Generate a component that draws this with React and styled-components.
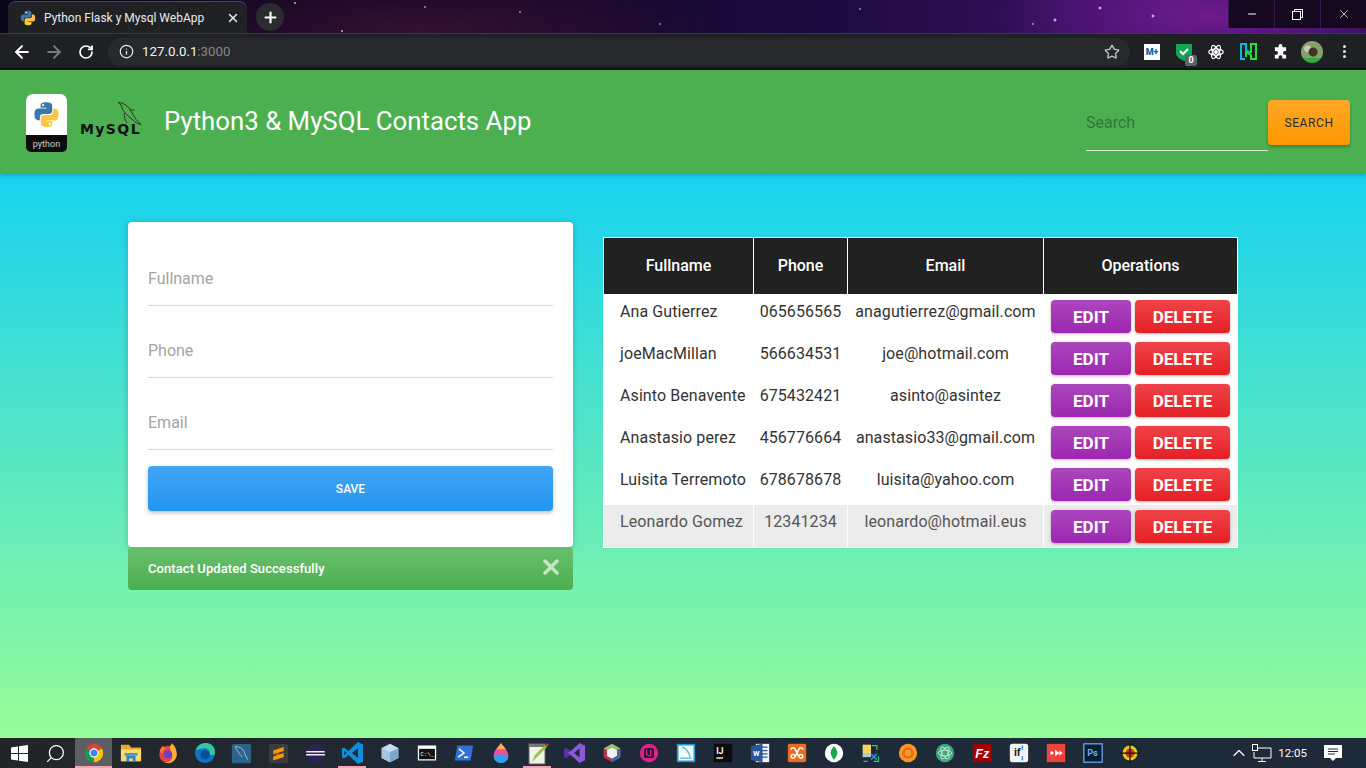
import React from "react";
import styled, { createGlobalStyle } from "styled-components";
import {
  ArrowLeft,
  ArrowRight,
  RotateCw,
  Info,
  Star,
  Plus,
  X,
  Minus,
  ChevronUp,
  Search as SearchIcon,
} from "lucide-react";

const contacts = [
  { name: "Ana Gutierrez", phone: "065656565", email: "anagutierrez@gmail.com" },
  { name: "joeMacMillan", phone: "566634531", email: "joe@hotmail.com" },
  { name: "Asinto Benavente", phone: "675432421", email: "asinto@asintez" },
  { name: "Anastasio perez", phone: "456776664", email: "anastasio33@gmail.com" },
  { name: "Luisita Terremoto", phone: "678678678", email: "luisita@yahoo.com" },
  { name: "Leonardo Gomez", phone: "12341234", email: "leonardo@hotmail.eus" },
];

const PythonMark = ({ size = 16 }) => (
  <svg width={size} height={size} viewBox="0 0 24 24">
    <path
      fill="#3b77a8"
      d="M11.9 1C6.5 1 6.8 3.4 6.8 3.4v2.5h5.2v.7H4.8S1.3 6.2 1.3 11.8s3 5.3 3 5.3h1.8v-2.6s-.1-3 3-3h5.1s2.9 0 2.9-2.8V4s.4-3-5.2-3z"
    />
    <path
      fill="#fdc63f"
      transform="rotate(180 12 12)"
      d="M11.9 1C6.5 1 6.8 3.4 6.8 3.4v2.5h5.2v.7H4.8S1.3 6.2 1.3 11.8s3 5.3 3 5.3h1.8v-2.6s-.1-3 3-3h5.1s2.9 0 2.9-2.8V4s.4-3-5.2-3z"
    />
    <circle cx="9" cy="3.6" r="1" fill="#fff" />
    <circle cx="15" cy="20.4" r="1" fill="#fff" />
  </svg>
);

const Svg = ({ children, size = 20 }) => (
  <svg width={size} height={size} viewBox="0 0 24 24">
    {children}
  </svg>
);

const taskIcons = [
  { id: "chrome", active: true, open: true, svg: (
    <Svg>
      <circle cx="12" cy="12" r="11" fill="#db4437" />
      <path d="M12 12 2.5 6.5A11 11 0 0 0 12 23z" fill="#0f9d58" />
      <path d="M12 12V23A11 11 0 0 0 21.5 6.500z" fill="#f4c20d" />
      <circle cx="12" cy="12" r="5.600" fill="#fff" />
      <circle cx="12" cy="12" r="4.200" fill="#4285f4" />
    </Svg>
  ) },
  { id: "folder", svg: (
    <Svg size={22}>
      <path d="M1 3h9l2 3h11v15H1z" fill="#e9a92f" />
      <path d="M1 8h22v13H1z" fill="#fbd96b" />
      <path d="M7 15h10v6h-3v-3h-4v3H7z" fill="#2f86c9" />
      <path d="M5 12h14v3H5z" fill="#3a9bdc" />
    </Svg>
  ) },
  { id: "firefox", svg: (
    <Svg size={22}>
      <circle cx="12" cy="13.500" r="9.500" fill="#e8414c" />
      <path d="M21.500 13.500A9.500 9.500 0 0 1 8 22c6 1 9.500-3 8.500-8-.6-3-2.500-5-2.500-8.500C15.500 2.500 16 2 16 1c3.500 3 5.500 7 5.500 12.500z" fill="#ffb02c" />
      <path d="M3 11c0-3 2-6 4-7 0 2 2 3 3 3-2 1-4 2-4 5-1 0-2-.5-3-1z" fill="#ff7a2c" />
      <circle cx="12" cy="13.500" r="4.500" fill="#6c3fc4" />
    </Svg>
  ) },
  { id: "edge", svg: (
    <Svg size={22}>
      <circle cx="12" cy="12" r="11" fill="#0f72c4" />
      <path d="M2 9C4 2 13-1 19 3c3 2 4 5 4 9 0 3-5 3-6 1 1-4-3-7-7-6-3 .5-6 1-8 2z" fill="#35c6a0" />
      <circle cx="12" cy="14" r="5" fill="#0a4f96" />
    </Svg>
  ) },
  { id: "workbench", svg: (
    <Svg size={21}>
      <rect x="1" y="1" width="22" height="22" rx="2" fill="#2b6488" />
      <path d="M5 4c6 0 10 4 11 9l3 6M5 4c2 5 4 8 8 12" stroke="#a9c9dc" strokeWidth="1" fill="none" />
    </Svg>
  ) },
  { id: "sublime", svg: (
    <Svg size={21}>
      <rect x="1" y="1" width="22" height="22" rx="2" fill="#3c3c3c" />
      <path d="M6 8.500l12-4v4.500L6 13z" fill="#ff9800" />
      <path d="M6 10.500l12 4V16L6 12z" fill="#c27406" />
      <path d="M6 15.500l12-4V16L6 20z" fill="#ff9800" />
    </Svg>
  ) },
  { id: "eclipse", svg: (
    <Svg size={21}>
      <circle cx="12" cy="12" r="11" fill="#2c2255" />
      <path d="M1.500 9h21v1.800h-21zM1.200 12.500h21.600v1.800H1.200z" fill="#f1eef8" />
    </Svg>
  ) },
  { id: "vscode", open: true, svg: (
    <Svg size={24}>
      <path d="M17 1l5 2.400v17.200L17 23 7.500 14 3 17.500 1 16.400V7.600L3 6.500 7.500 10z" fill="#0d8fdc" />
      <path d="M17 7l-6 5 6 5z" fill="#1e2a38" />
      <path d="M3.200 9.500v5L5.500 12z" fill="#1e2a38" />
    </Svg>
  ) },
  { id: "box", svg: (
    <Svg>
      <path d="M12 1l10 5v12l-10 5-10-5V6z" fill="#c8dcef" />
      <path d="M12 11l10-5v12l-10 5z" fill="#7ea7cf" />
      <path d="M12 11v12L2 18V6z" fill="#a5c4e2" />
    </Svg>
  ) },
  { id: "cmd", svg: (
    <Svg>
      <rect x="1" y="3" width="22" height="18" fill="#fff" />
      <rect x="2.500" y="7" width="19" height="12.500" fill="#111" />
      <text x="4" y="16" fontSize="7" fontFamily="Liberation Mono, monospace" fill="#fff">C:\_</text>
    </Svg>
  ) },
  { id: "powershell", svg: (
    <Svg>
      <path d="M4 3h19l-3 18H1z" fill="#2f6fd6" />
      <path d="M6 7l6 5-7 5M12 17h5" stroke="#fff" strokeWidth="1.800" fill="none" />
    </Svg>
  ) },
  { id: "drop", svg: (
    <Svg size={22}>
      <path d="M12 1c4 5 8 9 8 14a8 8 0 0 1-16 0c0-5 4-9 8-14z" fill="#e94fa0" />
      <path d="M12 1c2 3 4 5 5.500 7H7c1.500-2 3-4 5-7z" fill="#ffb13b" />
      <path d="M4 15a8 8 0 0 0 8 8c4 0 8-3 8-8-5-2-11-2-16 0z" fill="#2f9fe8" />
    </Svg>
  ) },
  { id: "notepad", open: true, svg: (
    <Svg size={24}>
      <rect x="3" y="3" width="16" height="20" fill="#f2f2ea" stroke="#666" />
      <path d="M3 3h16v3H3z" fill="#777" />
      <path d="M6 21l3-7 10-10 2 2-10 10z" fill="#8dc63f" />
      <path d="M19 4l2-2 2 2-2 2z" fill="#c0392b" />
    </Svg>
  ) },
  { id: "vstudio", svg: (
    <Svg size={22}>
      <path d="M17 1l6 3v16l-6 3-10-9-5 3.500L0 16V8l2-1.500L7 10z" fill="#8a5ad6" />
      <path d="M17 7l-6 5 6 5z" fill="#1e2a38" />
      <path d="M0 8l2-1.500L7 10l-3 2 3 2-5 3.500L0 16z" fill="#5b2fa8" />
    </Svg>
  ) },
  { id: "cube", svg: (
    <Svg>
      <path d="M12 1l10 5.500v11L12 23 2 17.500v-11z" fill="#c0314b" />
      <path d="M12 5l6 3.500v7L12 19l-6-3.500v-7z" fill="#f0f0f0" />
      <path d="M12 1l10 5.500-4 2L12 5 6 8.500l-4-2z" fill="#8fc66b" />
      <path d="M22 6.500v11L12 23v-4l6-3.500v-7z" fill="#3b6d9e" />
    </Svg>
  ) },
  { id: "pink", svg: (
    <Svg>
      <circle cx="12" cy="12" r="11" fill="#e01e8c" />
      <rect x="6" y="6" width="12" height="12" rx="2" fill="#2b1a2a" />
      <path d="M9 8v6h2M14 8v7h-3" stroke="#e01e8c" strokeWidth="1.500" fill="none" />
    </Svg>
  ) },
  { id: "dbforge", svg: (
    <Svg>
      <rect x="1" y="1" width="22" height="22" fill="#1e9bd1" />
      <rect x="3" y="3" width="18" height="18" fill="#f3f8fb" />
      <path d="M7 5c5 1 8 5 10 12M5 18h14" stroke="#5cb0d8" strokeWidth="1.500" fill="none" />
    </Svg>
  ) },
  { id: "idea", svg: (
    <Svg>
      <rect x="1" y="1" width="22" height="22" fill="#0c0c0c" />
      <text x="4" y="13" fontSize="10" fontWeight="700" fontFamily="Roboto, sans-serif" fill="#fff">IJ</text>
      <path d="M4 18h8" stroke="#fff" strokeWidth="1.600" />
    </Svg>
  ) },
  { id: "word", svg: (
    <Svg>
      <rect x="7" y="1" width="16" height="22" fill="#f2f4f8" />
      <path d="M13 5h8M13 9h8M13 13h8M13 17h8" stroke="#2b579a" strokeWidth="1.500" />
      <path d="M1 3.500 15 1v22L1 20.500z" fill="#2b579a" />
      <text x="3.500" y="15.500" fontSize="9" fontWeight="700" fontFamily="Roboto, sans-serif" fill="#fff">W</text>
    </Svg>
  ) },
  { id: "xampp", svg: (
    <Svg>
      <rect x="1" y="1" width="22" height="22" rx="2" fill="#ee6a1f" />
      <path d="M5 8c0-3 4-3 5 0l4 8c1 3 5 3 5 0s-4-3-5 0M19 8c0-3-4-3-5 0l-4 8c-1 3-5 3-5 0s4-3 5 0" stroke="#fff" strokeWidth="1.800" fill="none" />
    </Svg>
  ) },
  { id: "mongo", svg: (
    <Svg>
      <circle cx="12" cy="12" r="11" fill="#fff" />
      <path d="M12 4c3 3 4 6 4 8s-2 6-4 8c-2-2-4-6-4-8s1-5 4-8z" fill="#18a44c" />
    </Svg>
  ) },
  { id: "sourcetree", svg: (
    <Svg>
      <path d="M2 2h10v10H2z" fill="#f6d55c" />
      <path d="M2 12h10v5H2z" fill="#b9c7d4" />
      <path d="M13 3h6v5M3 22h5M21 16v6h-6" stroke="#2ecc71" strokeWidth="1.500" fill="none" />
      <path d="M12 13l7 7M19 13l-7 7" stroke="#2f86c9" strokeWidth="2" />
    </Svg>
  ) },
  { id: "ubuntu", svg: (
    <Svg>
      <circle cx="12" cy="12" r="11" fill="#f39a1f" />
      <circle cx="12" cy="12" r="5.500" fill="none" stroke="#f2622e" strokeWidth="3" />
    </Svg>
  ) },
  { id: "atom", svg: (
    <Svg>
      <circle cx="12" cy="12" r="11" fill="#3ca77c" />
      <g fill="none" stroke="#cfeee0" strokeWidth="1">
        <ellipse cx="12" cy="12" rx="8" ry="3.500" />
        <ellipse cx="12" cy="12" rx="8" ry="3.500" transform="rotate(60 12 12)" />
        <ellipse cx="12" cy="12" rx="8" ry="3.500" transform="rotate(120 12 12)" />
      </g>
    </Svg>
  ) },
  { id: "filezilla", svg: (
    <Svg>
      <rect x="1" y="1" width="22" height="22" fill="#a40000" />
      <text x="4" y="18" fontSize="15" fontWeight="700" fontStyle="italic" fontFamily="Liberation Sans, sans-serif" fill="#fff">Fz</text>
    </Svg>
  ) },
  { id: "if", svg: (
    <Svg>
      <rect x="1" y="1" width="22" height="22" rx="3" fill="#f4f4f4" />
      <text x="6" y="16" fontSize="13" fontWeight="700" fontFamily="Roboto, sans-serif" fill="#222">if</text>
      <path d="M16 3v5M16 16v5" stroke="#2f9fe8" strokeWidth="2" />
    </Svg>
  ) },
  { id: "anydo", svg: (
    <Svg>
      <rect x="1" y="1" width="22" height="22" fill="#f0433a" />
      <circle cx="7" cy="12" r="2" fill="#fff" />
      <path d="M11 8l5 4-5 4zM16 9l4 3-4 3z" fill="#fff" />
    </Svg>
  ) },
  { id: "ps", svg: (
    <Svg>
      <rect x="1" y="1" width="22" height="22" fill="#001e36" stroke="#7aa7f0" strokeWidth="1.500" />
      <text x="5" y="16" fontSize="11" fontWeight="700" fontFamily="Roboto, sans-serif" fill="#7aa7f0">Ps</text>
    </Svg>
  ) },
  { id: "cross", svg: (
    <Svg>
      <circle cx="12" cy="12" r="9" fill="#e0d020" />
      <circle cx="12" cy="12" r="5.500" fill="#d8321e" />
      <path d="M12 0v24M0 12h24" stroke="#111" strokeWidth="1.500" />
    </Svg>
  ) },
];

export default function App() {
  return (
    <Screen>
      <GlobalStyle />
      <TabStrip>
        <Tab>
          <PythonMark />
          <TabTitle>Python Flask y Mysql WebApp</TabTitle>
          <X size={14} color="#e8eaed" strokeWidth={2.5} />
        </Tab>
        <NewTab>
          <Plus size={17} color="#fff" strokeWidth={3} />
        </NewTab>
        <WindowButtons>
          <WindowButton><Minus size={12} color="#fff" /></WindowButton>
          <WindowButton>
            <svg width="11" height="11" viewBox="0 0 11 11" fill="none" stroke="#fff">
              <rect x="0.500" y="2.500" width="8" height="8" />
              <path d="M2.500 2.500v-2h8v8h-2" />
            </svg>
          </WindowButton>
          <WindowButton><X size={14} color="#fff" strokeWidth={1.2} /></WindowButton>
        </WindowButtons>
      </TabStrip>

      <Toolbar>
        <NavIcon><ArrowLeft size={20} color="#fff" strokeWidth={2.4} /></NavIcon>
        <NavIcon><ArrowRight size={20} color="#77797c" strokeWidth={2.4} /></NavIcon>
        <NavIcon><RotateCw size={16} color="#fff" strokeWidth={2.6} /></NavIcon>
        <Omnibox>
          <Info size={15} color="#e8eaed" strokeWidth={2} />
          <Url>127.0.0.1<Port>:3000</Port></Url>
          <Star size={16} color="#c4c6c9" strokeWidth={2} />
        </Omnibox>
        <Extensions>
          <Extension>
            <MovistarIcon>M+</MovistarIcon>
          </Extension>
          <Extension>
            <svg width="16" height="18" viewBox="0 0 16 18">
              <path d="M0 1h16v9c0 4-4 6-8 8-4-2-8-4-8-8z" fill="#12a554" />
              <path d="M4 8l3 3 5-5" stroke="#fff" strokeWidth="2" fill="none" />
            </svg>
            <CountBadge>0</CountBadge>
          </Extension>
          <Extension>
            <svg width="16" height="16" viewBox="0 0 24 24" fill="none" stroke="#fff" strokeWidth="1.800">
              <ellipse cx="12" cy="12" rx="11" ry="4.500" />
              <ellipse cx="12" cy="12" rx="11" ry="4.500" transform="rotate(60 12 12)" />
              <ellipse cx="12" cy="12" rx="11" ry="4.500" transform="rotate(120 12 12)" />
              <circle cx="12" cy="12" r="2" fill="#fff" />
            </svg>
          </Extension>
          <Extension>
            <svg width="17" height="17" viewBox="0 0 17 17" fill="none" strokeWidth="2">
              <path d="M5 16H1V1h5v6" stroke="#11b5e4" />
              <path d="M6 7l5 3" stroke="#11b5e4" />
              <path d="M11 10V1h5v15h-5v-4l-5-3v5" stroke="#22e23a" />
            </svg>
          </Extension>
          <Extension>
            <svg width="15" height="15" viewBox="0 0 24 24" fill="#fff">
              <path d="M9 3a3 3 0 0 1 6 0v2h6v6h-2a3 3 0 0 0 0 6h2v6h-6v-2a3 3 0 0 0-6 0v2H3v-6h2a3 3 0 0 0 0-6H3V5h6z" />
            </svg>
          </Extension>
          <Extension>
            <Avatar />
          </Extension>
          <Extension>
            <MenuDots><i /><i /><i /></MenuDots>
          </Extension>
        </Extensions>
      </Toolbar>

      <Navbar>
        <Brand>
          <PythonBadge>
            <PythonBadgeTop><PythonMark size={27} /></PythonBadgeTop>
            <PythonBadgeLabel>python</PythonBadgeLabel>
          </PythonBadge>
          <MysqlLogo>
            <svg width="24" height="26" viewBox="0 0 24 26" fill="none" stroke="#1a1a1a" strokeWidth="0.800">
              <path d="M0.500 0.500c5 .5 9 3 11.500 7 2 3 4 7 6 10l5 5c-3-.5-6-2-8-4.500-2-2-4-3-6-5C6 10 4 7 3.500 4 3 2.500 1.500 1.500.5.500z" />
              <path d="M6 11c0 4 1 7 3 10M12 7.500c2 .5 3 .5 4.500.5" />
            </svg>
            <MysqlText>MySQL</MysqlText>
          </MysqlLogo>
          <AppTitle>Python3 &amp; MySQL Contacts App</AppTitle>
        </Brand>
        <SearchForm>
          <SearchInput placeholder="Search" />
          <SearchButton>Search</SearchButton>
        </SearchForm>
      </Navbar>

      <Main>
        <FormColumn>
          <FormCard>
            <Field placeholder="Fullname" />
            <Field placeholder="Phone" />
            <Field placeholder="Email" />
            <SaveButton>Save</SaveButton>
          </FormCard>
          <Alert>
            <span>Contact Updated Successfully</span>
            <AlertClose>
              <X size={24} strokeWidth={3.5} color="#fff" />
            </AlertClose>
          </Alert>
        </FormColumn>

        <ContactsTable>
          <thead>
            <tr>
              <Th $width={149}>Fullname</Th>
              <Th $width={94}>Phone</Th>
              <Th $width={196}>Email</Th>
              <Th $width={194}>Operations</Th>
            </tr>
          </thead>
          <tbody>
            {contacts.map((c, i) => (
              <Row key={c.email} $hover={i === contacts.length - 1}>
                <NameCell>{c.name}</NameCell>
                <Td>{c.phone}</Td>
                <Td>{c.email}</Td>
                <ActionsCell>
                  <Actions>
                    <EditButton>Edit</EditButton>
                    <DeleteButton>Delete</DeleteButton>
                  </Actions>
                </ActionsCell>
              </Row>
            ))}
          </tbody>
        </ContactsTable>
      </Main>

      <Taskbar>
        <StartButton>
          <svg width="17" height="17" viewBox="0 0 17 17" fill="#fff">
            <path d="M0 2.500 7 1.500V8H0zM8 1.300 17 0v8H8zM0 9h7v6.500L0 14.500zM8 9h9v8l-9-1.300z" />
          </svg>
        </StartButton>
        <SearchButtonSlot>
          <SearchIcon size={21} color="#fff" strokeWidth={1.4} />
        </SearchButtonSlot>
        {taskIcons.map((icon) => (
          <TaskButton key={icon.id} $active={icon.active} $open={icon.open}>
            {icon.svg}
          </TaskButton>
        ))}
        <Tray>
          <ChevronUp size={20} color="#fff" strokeWidth={1.4} />
          <svg width="20" height="20" viewBox="0 0 20 20" fill="none" stroke="#fff">
            <path d="M5 5H19V15H2V9M10 15v3M6 18.500h8" />
            <rect x="0.500" y="1.500" width="5" height="6" fill="#1e2a38" />
          </svg>
          <Clock>12:05</Clock>
          <svg width="18" height="18" viewBox="0 0 18 18">
            <path d="M0 1h18v13h-6l-3 3-3-3H0z" fill="#fff" />
            <path d="M4 5h10M4 7.500h10M4 10h7" stroke="#1e2a38" />
          </svg>
        </Tray>
      </Taskbar>
    </Screen>
  );
}

const GlobalStyle = createGlobalStyle`
  html, body {
    margin: 0;
    padding: 0;
    overflow: hidden;
  }
  body {
    font-family: Roboto, "Liberation Sans", sans-serif;
  }
  * {
    box-sizing: border-box;
  }
`;

const Screen = styled.div`
  width: 1366px;
  height: 768px;
  display: flex;
  flex-direction: column;
  overflow: hidden;
`;

const TabStrip = styled.div`
  height: 33px;
  display: flex;
  align-items: flex-end;
  padding-left: 8px;
  background:
    radial-gradient(circle at 295px 3px, #fff 0, transparent 1.5px),
    radial-gradient(circle at 342px 31px, #fff 0, transparent 1.5px),
    radial-gradient(circle at 425px 7px, #d8c8f0 0, transparent 1.5px),
    radial-gradient(circle at 520px 12px, #cbb8e8 0, transparent 1.5px),
    radial-gradient(circle at 660px 24px, #cbb8e8 0, transparent 1.5px),
    radial-gradient(circle at 860px 9px, #cbb8e8 0, transparent 1.5px),
    radial-gradient(circle at 1100px 8px, #fff 0, transparent 2px),
    radial-gradient(circle at 1055px 20px, #fff 0, transparent 2px),
    radial-gradient(circle at 1153px 16px, #fff 0, transparent 2px),
    radial-gradient(circle at 1033px 24px, #e8d0f8 0, transparent 1.5px),
    radial-gradient(ellipse 220px 70px at 1210px 15px, #6e1a8e 0, transparent 100%),
    radial-gradient(ellipse 300px 60px at 420px 30px, #33102f 0, transparent 100%),
    linear-gradient(90deg, #0a0618 0%, #14082a 35%, #1d0a3e 60%, #3a1268 85%, #2a0e52 100%);
`;

const Tab = styled.div`
  width: 239px;
  height: 31px;
  padding: 0 7px 0 12px;
  display: flex;
  align-items: center;
  background: #1f2124;
  border-radius: 8px 8px 0 0;
  box-shadow: 0 -1px 0 #4c3a9a;
`;

const TabTitle = styled.span`
  flex: 1;
  margin-left: 8px;
  font-size: 12px;
  color: #e8eaed;
  white-space: nowrap;
`;

const NewTab = styled.div`
  width: 28px;
  height: 28px;
  margin: 0 0 2px 9px;
  border-radius: 50%;
  background: #2b2c2e;
  display: flex;
  align-items: center;
  justify-content: center;
`;

const WindowButtons = styled.div`
  margin-left: auto;
  align-self: flex-start;
  display: flex;
  height: 28px;
  background: #14091e;
`;

const WindowButton = styled.div`
  width: 46px;
  height: 28px;
  display: flex;
  align-items: center;
  justify-content: center;
  border-left: 1px solid #3a1850;
`;

const Toolbar = styled.div`
  height: 37px;
  display: flex;
  align-items: center;
  padding: 1px 0 0 6px;
  background: #1e2023;
  border-top: 1px solid #3a3b3f;
  border-bottom: 2px solid #111214;
`;

const NavIcon = styled.div`
  width: 32px;
  height: 28px;
  display: flex;
  align-items: center;
  justify-content: center;
`;

const Omnibox = styled.div`
  width: 1022px;
  height: 28px;
  margin-left: 6px;
  padding: 0 10px 0 11px;
  display: flex;
  align-items: center;
  background: #28292c;
  border-radius: 14px;
`;

const Url = styled.span`
  flex: 1;
  margin-left: 8px;
  font-size: 13.300px;
  color: #f1f3f4;
`;

const Port = styled.span`
  color: #85878a;
`;

const Extensions = styled.div`
  display: flex;
  margin-left: 6px;
`;

const Extension = styled.div`
  position: relative;
  width: 32px;
  height: 28px;
  display: flex;
  align-items: center;
  justify-content: center;
`;

const MovistarIcon = styled.div`
  width: 16px;
  height: 16px;
  background: #fff;
  color: #0b5fa5;
  font-size: 9px;
  font-weight: 900;
  line-height: 16px;
  text-align: center;
`;

const CountBadge = styled.span`
  position: absolute;
  right: 3px;
  bottom: 0;
  width: 12px;
  height: 11px;
  background: #5f6368;
  border-radius: 2px;
  color: #fff;
  font-size: 9px;
  font-weight: 700;
  line-height: 11px;
  text-align: center;
`;

const Avatar = styled.div`
  width: 22px;
  height: 22px;
  border-radius: 50%;
  background:
    radial-gradient(circle at 55% 50%, #3f3428 0 4px, transparent 5px),
    radial-gradient(circle at 30% 35%, #c9c9b8 0 3px, transparent 4px),
    linear-gradient(#86a06a 0 78%, #2fae3a 78%);
`;

const MenuDots = styled.div`
  display: flex;
  flex-direction: column;
  gap: 2px;
  i {
    display: block;
    width: 3px;
    height: 3px;
    border-radius: 50%;
    background: #e8eaed;
  }
`;

const Navbar = styled.nav`
  position: relative;
  z-index: 1;
  height: 104px;
  flex-shrink: 0;
  padding: 0 16px 0 26px;
  display: flex;
  align-items: center;
  justify-content: space-between;
  background: #4caf50;
  box-shadow: 0 1px 4px rgba(0, 0, 0, 0.25);
`;

const Brand = styled.div`
  display: flex;
  align-items: center;
`;

const PythonBadge = styled.div`
  width: 41px;
  height: 58px;
  margin-top: 1px;
  display: flex;
  flex-direction: column;
  border-radius: 7px 7px 5px 5px;
  overflow: hidden;
`;

const PythonBadgeTop = styled.div`
  flex: 1;
  padding-top: 1px;
  background: #fff;
  display: flex;
  align-items: center;
  justify-content: center;
`;

const PythonBadgeLabel = styled.div`
  height: 17px;
  background: #0d0d0d;
  color: #cfcfcf;
  font-size: 9px;
  line-height: 18px;
  text-align: center;
`;

const MysqlLogo = styled.div`
  width: 62px;
  height: 36px;
  margin-left: 13px;
  margin-bottom: 4px;
  display: flex;
  flex-direction: column;
  align-items: flex-end;
  svg {
    margin-bottom: -6px;
  }
`;

const MysqlText = styled.span`
  align-self: flex-start;
  font-family: "DejaVu Sans", sans-serif;
  font-size: 14px;
  font-weight: 700;
  line-height: 14px;
  color: #111;
  letter-spacing: 1.4px;
`;

const AppTitle = styled.h1`
  margin: 0 0 3px 22px;
  font-size: 25.800px;
  font-weight: 400;
  color: #fff;
`;

const SearchForm = styled.form`
  display: flex;
  align-items: flex-start;
  margin-top: 7px;
`;

const SearchInput = styled.input`
  width: 182px;
  height: 56px;
  margin-top: -5px;
  padding: 0;
  border: 0;
  border-bottom: 1px solid rgba(255, 255, 255, 0.75);
  background: transparent;
  font: 400 16px Roboto, sans-serif;
  outline: none;
  &::placeholder {
    color: rgba(0, 0, 0, 0.35);
    opacity: 1;
  }
`;

const SearchButton = styled.button`
  width: 82px;
  height: 45px;
  border: 0;
  border-radius: 4px;
  background: linear-gradient(#ffa726, #ff9800);
  box-shadow: 0 2px 3px rgba(0, 0, 0, 0.25);
  font: 400 12px Roboto, sans-serif;
  letter-spacing: 0.6px;
  text-transform: uppercase;
  color: #2b2b2b;
`;

const Main = styled.main`
  flex: 1;
  padding: 48px 0 0 128px;
  display: flex;
  align-items: flex-start;
  gap: 30px;
  background: linear-gradient(#17d2f0, #97fc98);
`;

const FormColumn = styled.div`
  width: 445px;
  display: flex;
  flex-direction: column;
`;

const FormCard = styled.div`
  height: 325px;
  padding: 20px 20px 0;
  display: flex;
  flex-direction: column;
  gap: 8px;
  background: #fff;
  border-radius: 4px;
  box-shadow: 0 1px 6px rgba(0, 0, 0, 0.2);
`;

const Field = styled.input`
  height: 64px;
  flex-shrink: 0;
  padding: 9px 0 0;
  border: 0;
  border-bottom: 1px solid #d8d8d8;
  font: 400 16px Roboto, sans-serif;
  outline: none;
  &::placeholder {
    color: #a4a4a4;
    opacity: 1;
  }
`;

const SaveButton = styled.button`
  height: 45px;
  margin-top: 8px;
  border: 0;
  border-radius: 4px;
  background: linear-gradient(#42a5f5, #2196f3);
  box-shadow: 0 2px 4px rgba(0, 0, 0, 0.25);
  font: 500 12px Roboto, sans-serif;
  text-transform: uppercase;
  color: #fff;
`;

const Alert = styled.div`
  height: 43px;
  padding: 0 10px 0 20px;
  display: flex;
  align-items: center;
  justify-content: space-between;
  background: linear-gradient(#6abf6e, #4caf50);
  border-radius: 3px 3px 4px 4px;
  font-size: 13px;
  font-weight: 500;
  letter-spacing: 0.07px;
  color: #fff;
`;

const AlertClose = styled.span`
  display: flex;
  margin-top: -3px;
  opacity: 0.65;
`;

const ContactsTable = styled.table`
  width: 635px;
  margin-top: 15px;
  border-collapse: separate;
  border-spacing: 0;
  table-layout: fixed;
  border: 1px solid #fff;
  background: #fff;
  font-size: 16px;
`;

const Th = styled.th`
  width: ${(props) => props.$width}px;
  height: 57px;
  padding: 0 0 2px;
  background: #212121;
  background-clip: padding-box;
  border-left: 1px solid #fff;
  border-bottom: 1px solid #fff;
  font-weight: 500;
  color: #fff;
  &:first-child {
    border-left: 0;
  }
`;

const Row = styled.tr`
  height: 42px;
  background: ${(props) => (props.$hover ? "#ececec" : "#fff")};
  color: ${(props) => (props.$hover ? "#555" : "#333")};
`;

const Td = styled.td`
  padding: 5px 0 0;
  height: 42px;
  text-align: center;
  vertical-align: top;
  line-height: 23px;
  letter-spacing: 0.09px;
  border-left: 1px solid #fff;
  white-space: nowrap;
`;

const NameCell = styled(Td)`
  padding-left: 16px;
  border-left: 0;
  text-align: left;
`;

const ActionsCell = styled(Td)`
  padding: 5px 0 0;
`;

const Actions = styled.div`
  display: flex;
  justify-content: center;
  gap: 4px;
`;

const ActionButton = styled.button`
  height: 33px;
  padding: 0;
  border: 0;
  border-radius: 4px;
  box-shadow: 0 1px 3px rgba(0, 0, 0, 0.3);
  font: 700 17px Roboto, sans-serif;
  text-transform: uppercase;
  color: #fff;
`;

const EditButton = styled(ActionButton)`
  width: 80px;
  background: linear-gradient(#ab47bc, #9c27b0);
`;

const DeleteButton = styled(ActionButton)`
  width: 95px;
  background: linear-gradient(#ef4349, #e52025);
`;

const Taskbar = styled.footer`
  height: 30px;
  flex-shrink: 0;
  display: flex;
  background: linear-gradient(90deg, #232628 0%, #1e2a38 40%, #1e2a38 100%);
`;

const TaskButton = styled.div`
  position: relative;
  width: 37px;
  height: 30px;
  display: flex;
  align-items: center;
  justify-content: center;
  background: ${(props) => (props.$active ? "#5c5f61" : "transparent")};
  &::after {
    content: "";
    display: ${(props) => (props.$open ? "block" : "none")};
    position: absolute;
    bottom: 0;
    left: ${(props) => (props.$active ? "0" : "4px")};
    right: ${(props) => (props.$active ? "0" : "5px")};
    height: 2px;
    background: #f4a6ae;
  }
`;

const StartButton = styled(TaskButton)`
  width: 38px;
`;

const SearchButtonSlot = styled(TaskButton)`
  svg {
    margin-left: -3px;
    transform: scaleX(-1);
  }
`;

const Tray = styled.div`
  margin-left: auto;
  padding-right: 24px;
  display: flex;
  align-items: center;
  gap: 3px;
`;

const Clock = styled.span`
  margin: 0 14px 0 3px;
  font-size: 11.500px;
  color: #fff;
`;
